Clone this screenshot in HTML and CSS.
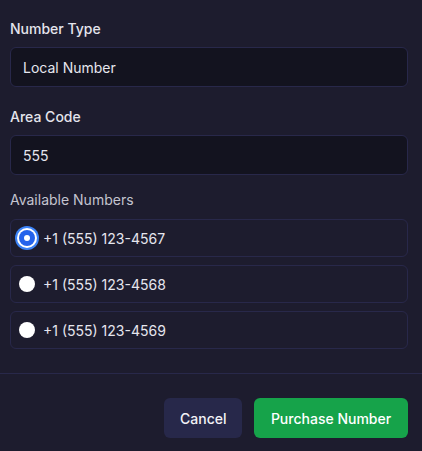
FILE: index.html
```html
<!DOCTYPE html>
<html lang="en">
<head>
<meta charset="utf-8">
<title>Purchase Number</title>
<link rel="stylesheet" href="styles.css">
</head>
<body>
<div class="modal">
  <div class="content">
    <div class="field">
      <label class="label">Number Type</label>
      <div class="input">Local Number</div>
    </div>
    <div class="field">
      <label class="label">Area Code</label>
      <div class="input">555</div>
    </div>
    <div class="numbers">
      <div class="numbers-label">Available Numbers</div>
      <div class="options">
        <div class="option"><span class="radio checked"></span><span>+1 (555) 123-4567</span></div>
        <div class="option"><span class="radio"></span><span>+1 (555) 123-4568</span></div>
        <div class="option"><span class="radio"></span><span>+1 (555) 123-4569</span></div>
      </div>
    </div>
  </div>
  <div class="footer">
    <button class="btn btn-cancel">Cancel</button>
    <button class="btn btn-primary">Purchase Number</button>
  </div>
</div>
</body>
</html>
```
FILE: styles.css
```css
* { box-sizing: border-box; }
html, body {
  margin: 0;
  padding: 0;
  background: #1d1c2e;
  font-family: Inter, "Noto Sans", sans-serif;
  font-size: 14px;
  color: #e6e6ee;
}
.modal {
  width: 422px;
  height: 451px;
  display: flex;
  flex-direction: column;
}
.content {
  padding: 19px 14px 0 10px;
  display: flex;
  flex-direction: column;
}
.field {
  display: flex;
  flex-direction: column;
  gap: 8px;
  margin-bottom: 20px;
}
.field + .field { margin-bottom: 15px; }
.label {
  font-size: 14px;
  line-height: 20px;
  font-weight: 500;
  color: #e4e4ec;
}
.input {
  height: 40px;
  border: 1px solid #28284a;
  background: #13131f;
  border-radius: 6px;
  padding: 0 12px;
  display: flex;
  align-items: center;
  color: #e6e6ee;
}
.numbers-label {
  line-height: 20px;
  color: #c4c4d0;
  margin-bottom: 9px;
}
.options {
  display: flex;
  flex-direction: column;
  gap: 8px;
}
.option {
  height: 38px;
  border: 1px solid #28284a;
  border-radius: 6px;
  padding: 0 8px;
  display: flex;
  align-items: center;
  gap: 8px;
  color: #e6e6ee;
}
.radio {
  width: 16px;
  height: 16px;
  border-radius: 50%;
  background: #ffffff;
  flex: none;
  position: relative;
}
.radio.checked {
  background: #2563eb;
  box-shadow: 0 0 0 2px #ffffff, 0 0 0 4px #3b82f6;
}
.radio.checked::after {
  content: "";
  position: absolute;
  left: 5px;
  top: 5px;
  width: 6px;
  height: 6px;
  border-radius: 50%;
  background: #ffffff;
}
.footer {
  margin-top: 24px;
  border-top: 1px solid #28284a;
  padding: 24px 14px 0 10px;
  display: flex;
  justify-content: flex-end;
  gap: 12px;
}
.btn {
  height: 40px;
  border: none;
  border-radius: 6px;
  padding: 0 16px;
  font-family: Inter, "Noto Sans", sans-serif;
  font-size: 14px;
  font-weight: 500;
  color: #f2f2f7;
}
.btn-cancel {
  background: #27284a;
  width: 78px;
}
.btn-primary {
  background: #16a34a;
  width: 154px;
  color: #ffffff;
}
```
